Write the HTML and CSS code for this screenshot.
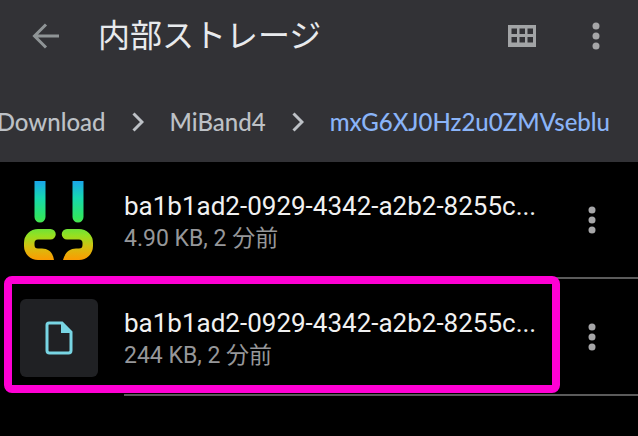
FILE: index.html
```html
<!DOCTYPE html>
<html lang="ja">
<head>
<meta charset="utf-8">
<meta name="viewport" content="width=device-width, initial-scale=1">
<title>内部ストレージ</title>
<link rel="stylesheet" href="styles.css">
</head>
<body>
<header class="header">
  <div class="toolbar">
    <button class="icon-button" type="button" aria-label="戻る">
      <svg width="28" height="26" viewBox="0 0 28 26" fill="none" stroke="#8f9496" stroke-width="3"><path d="M27 13H3M14 1.500L2.500 13L14 24.500"/></svg>
    </button>
    <h1 class="title">内部ストレージ</h1>
    <button class="icon-button" type="button" aria-label="グリッド表示">
      <svg width="28" height="22" viewBox="0 0 28 22"><path fill="#a2a4a6" fill-rule="evenodd" d="M0 0H28V22H0ZM3.500 3.500V9H9V3.500ZM11.500 3.500V9H17V3.500ZM19.500 3.500V9H25V3.500ZM3.500 12V17.500H9V12ZM11.500 12V17.500H17V12ZM19.500 12V17.500H25V12Z"/></svg>
    </button>
    <button class="icon-button menu-button" type="button" aria-label="その他">
      <svg class="dots" width="8" height="28" viewBox="0 0 8 28"><circle cx="4" cy="4" r="3.500"/><circle cx="4" cy="14" r="3.500"/><circle cx="4" cy="24" r="3.500"/></svg>
    </button>
  </div>
  <nav class="crumbs" aria-label="フォルダ">
    <a class="crumb" href="#">Download</a>
    <svg class="chevron" width="12" height="20" viewBox="0 0 12 20"><path d="M1.500 1.500L10 10L1.500 18.500"/></svg>
    <a class="crumb" href="#">MiBand4</a>
    <svg class="chevron" width="12" height="20" viewBox="0 0 12 20"><path d="M1.500 1.500L10 10L1.500 18.500"/></svg>
    <a class="crumb current" href="#" aria-current="page">mxG6XJ0Hz2u0ZMVseblu</a>
  </nav>
</header>
<main>
  <ul class="files">
    <li class="file">
      <div class="thumb">
        <svg width="78" height="84" viewBox="0 0 78 84">
          <defs><linearGradient id="rainbow" gradientUnits="userSpaceOnUse" x1="0" y1="3" x2="0" y2="82"><stop offset="0" stop-color="#1aa8e8"/><stop offset=".2" stop-color="#16d8b0"/><stop offset=".45" stop-color="#30e660"/><stop offset=".68" stop-color="#96e020"/><stop offset=".82" stop-color="#d4c010"/><stop offset="1" stop-color="#ff9800"/></linearGradient></defs>
          <g fill="url(#rainbow)">
            <path d="M14.500 2H25.500V38A5.500 5.500 0 0 1 14.500 38ZM52.500 2H63.500V38A5.500 5.500 0 0 1 52.500 38Z"/>
            <path d="M18 50H30.500A5 5 0 0 1 30.500 60.500H18Q14.500 60.500 14.500 64V66Q14.500 69.500 18 69.500H22C29 69.500 33 74 34 81H18A14 14 0 0 1 4 67V64A14 14 0 0 1 18 50Z"/>
            <path d="M59 50H47A5 5 0 0 0 47 60.500H59Q62.500 60.500 62.500 64V66Q62.500 69.500 59 69.500H56C49 69.500 45 74 43 81H59A14 14 0 0 0 73 67V64A14 14 0 0 0 59 50Z"/>
          </g>
        </svg>
      </div>
      <div class="info">
        <div class="text">
          <div class="name">ba1b1ad2-0929-4342-a2b2-8255c...</div>
          <div class="meta">4.90 KB, 2 分前</div>
        </div>
        <button class="icon-button menu-button" type="button" aria-label="ファイルのメニュー">
          <svg class="dots" width="8" height="28" viewBox="0 0 8 28"><circle cx="4" cy="4" r="3.500"/><circle cx="4" cy="14" r="3.500"/><circle cx="4" cy="24" r="3.500"/></svg>
        </button>
      </div>
    </li>
    <li class="file highlighted">
      <div class="thumb document">
        <svg width="28" height="34" viewBox="0 0 28 34"><path d="M4 2H17L26 11V29.500Q26 32 23.500 32H4.500Q2 32 2 29.500V4Q2 2 4 2Z" fill="none" stroke="#78d5e3" stroke-width="3"/><path d="M16 2V12H26Z" fill="#78d5e3"/></svg>
      </div>
      <div class="info">
        <div class="text">
          <div class="name">ba1b1ad2-0929-4342-a2b2-8255c...</div>
          <div class="meta">244 KB, 2 分前</div>
        </div>
        <button class="icon-button menu-button" type="button" aria-label="ファイルのメニュー">
          <svg class="dots" width="8" height="28" viewBox="0 0 8 28"><circle cx="4" cy="4" r="3.500"/><circle cx="4" cy="14" r="3.500"/><circle cx="4" cy="24" r="3.500"/></svg>
        </button>
      </div>
    </li>
  </ul>
</main>
</body>
</html>
```
FILE: styles.css
```css
* {
  box-sizing: border-box;
}

body {
  margin: 0;
  background: #000;
  font-family: Roboto, "Noto Sans CJK JP", sans-serif;
}

.header {
  background: #323236;
  overflow: hidden;
}

.toolbar {
  display: flex;
  align-items: center;
  height: 71px;
  padding: 0 22px;
}

.icon-button {
  display: flex;
  align-items: center;
  justify-content: center;
  flex: none;
  width: 48px;
  height: 48px;
  padding: 0;
  border: 0;
  background: none;
}

.title {
  flex: 1;
  margin: 0 0 0 28px;
  color: #e8eaed;
  font-size: 32px;
  font-weight: 400;
  line-height: 48px;
}

.toolbar .menu-button {
  margin-left: 26px;
  margin-right: -4px;
}

.dots {
  fill: #a6a6a8;
}

.crumbs {
  display: flex;
  align-items: center;
  justify-content: flex-end;
  gap: 26px;
  height: 91px;
  padding: 10px 28px 0 0;
}

.crumb {
  color: #bdc1c6;
  font-family: Lato, sans-serif;
  font-size: 24px;
  font-weight: 500;
  line-height: 32px;
  text-decoration: none;
  white-space: nowrap;
}

.current {
  color: #8ab4f8;
}

.chevron {
  flex: none;
  fill: none;
  stroke: #bdc1c6;
  stroke-width: 3;
}

.files {
  margin: 0;
  padding: 0;
  list-style: none;
}

.file {
  position: relative;
  display: flex;
  gap: 26px;
  height: 117px;
  padding-left: 20px;
}

.thumb {
  display: flex;
  align-items: center;
  justify-content: center;
  align-self: center;
  flex: none;
  width: 78px;
  height: 78px;
}

.document {
  border-radius: 6px;
  background: #202124;
}

.info {
  display: flex;
  align-items: center;
  flex: 1;
  min-width: 0;
  padding-right: 22px;
  border-bottom: 2px solid #5b5b5b;
}

.text {
  flex: 1;
  min-width: 0;
  padding-top: 5px;
}

.info .menu-button {
  margin-left: 22px;
}

.name {
  overflow: hidden;
  color: #f1f1f1;
  font-size: 26px;
  line-height: 34px;
  text-overflow: ellipsis;
  white-space: nowrap;
}

.meta {
  color: #96979a;
  font-size: 23px;
  line-height: 32px;
}

.highlighted::after {
  content: "";
  position: absolute;
  inset: -3px 78px 3px 4px;
  border: 8px solid #ff00d4;
  border-radius: 8px;
  pointer-events: none;
}
```
